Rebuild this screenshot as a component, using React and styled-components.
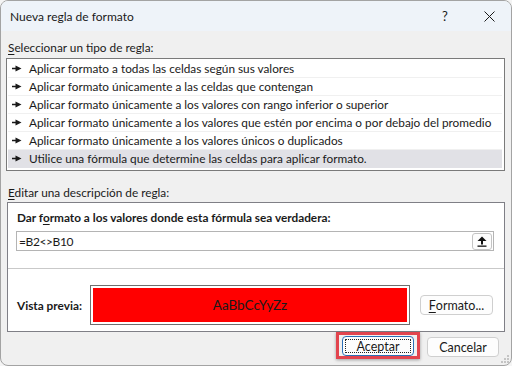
import styled, { createGlobalStyle } from "styled-components";

const GlobalStyle = createGlobalStyle`
  html, body {
    margin: 0;
    padding: 0;
    background: #f4f4f4;
  }
  body {
    font-family: Lato, "Noto Sans", sans-serif;
    font-size: 11.8px;
    color: #1a1a1a;
  }
`;

const Window = styled.div`
  position: relative;
  box-sizing: border-box;
  width: 512px;
  height: 366px;
  border: 1px solid #a3a3a3;
  border-radius: 8px;
  overflow: hidden;
  background: #f0f0f0;
  display: flex;
  flex-direction: column;
`;

const TitleBar = styled.div`
  height: 30px;
  background: #eef3f9;
  display: flex;
  align-items: center;
  padding-left: 9px;
`;

const Title = styled.span`
  flex: 1;
  font-size: 12px;
  color: #1a1a1a;
`;

const TitleButton = styled.span`
  width: 44px;
  height: 30px;
  display: flex;
  align-items: center;
  justify-content: center;
  font-size: 13px;
  color: #1a1a1a;
`;

const Body = styled.div`
  flex: 1;
  display: flex;
  flex-direction: column;
  padding: 9px 6px 0 5px;
`;

const SectionLabel = styled.div`
  height: 16px;
  line-height: 16px;
  padding-left: 2px;
  margin-bottom: ${(p) => p.gap}px;
  margin-top: ${(p) => p.top || 0}px;
  & u {
    text-decoration-thickness: 1px;
    text-underline-offset: 2px;
  }
`;

const ListBox = styled.div`
  background: #fff;
  border: 1px solid #7a7a7a;
  padding: 1px 2px 2px 1px;
`;

const Row = styled.div`
  height: 17px;
  border-bottom: 1px solid ${(p) => (p.selected ? "#e1e1e6" : "#f0f0f0")};
  background: ${(p) => (p.selected ? "#e1e1e6" : "#fff")};
  display: flex;
  align-items: center;
  padding-left: 4px;
  gap: 7px;
  white-space: nowrap;
  & svg {
    flex-shrink: 0;
  }
`;

const Bullet = () => (
  <svg width="10" height="7" viewBox="0 0 10 7">
    <line x1="0" y1="3.5" x2="4" y2="3.5" stroke="#1a1a1a" strokeWidth="1.3" />
    <polygon points="3.5,0.5 9.5,3.5 3.5,6.5" fill="#1a1a1a" />
  </svg>
);

const Panel = styled.div`
  margin: 0 0 0 1px;
  background: #fff;
  border: 1px solid #7f7f86;
  height: 130px;
  box-sizing: border-box;
  display: flex;
  flex-direction: column;
`;

const PanelTop = styled.div`
  padding: 7px 10px 0 8px;
  height: 66px;
  box-sizing: border-box;
  border-bottom: 1px solid #c9c9c9;
`;

const BoldLabel = styled.div`
  font-weight: 700;
  height: 16px;
  line-height: 16px;
  padding-left: 1px;
  margin-bottom: 5px;
  white-space: nowrap;
  & u {
    text-underline-offset: 2px;
  }
`;

const InputBox = styled.div`
  height: 20px;
  box-sizing: border-box;
  border: 1px solid #b4b4b4;
  display: flex;
  align-items: center;
  justify-content: space-between;
  padding: 0 1px 0 2px;
  font-size: 12px;
  letter-spacing: -0.4px;
`;

const RefButton = styled.div`
  width: 20px;
  height: 17px;
  box-sizing: border-box;
  border: 1px solid #c4c4c4;
  border-radius: 3px;
  background: #fdfdfd;
  display: flex;
  align-items: center;
  justify-content: center;
`;

const PanelBottom = styled.div`
  flex: 1;
  display: flex;
  align-items: center;
  padding: 16px 9px 6px 9px;
`;

const PreviewLabel = styled.span`
  font-weight: 700;
  width: 73px;
  white-space: nowrap;
`;

const PreviewFrame = styled.div`
  width: 320px;
  height: 40px;
  box-sizing: border-box;
  border: 1px solid #6f6f6f;
  padding: 2px;
  margin-right: 10px;
`;

const PreviewFill = styled.div`
  height: 100%;
  background: #ff0000;
  display: flex;
  align-items: center;
  justify-content: center;
  font-size: 13.5px;
  color: #1a1a1a;
`;

const Button = styled.div`
  width: ${(p) => p.w || 72}px;
  height: 20px;
  box-sizing: border-box;
  border: 1px solid ${(p) => (p.primary ? "#2d6fb6" : "#cfcfcf")};
  border-radius: 4px;
  background: #fdfdfd;
  display: flex;
  align-items: center;
  justify-content: center;
  font-size: 12.5px;
  position: relative;
  margin-top: ${(p) => p.drop || 0}px;
  & u {
    text-underline-offset: 2px;
  }
`;

const FocusRing = styled.span`
  position: absolute;
  inset: 2px;
  border: 1px dotted #222;
  border-radius: 1px;
`;

const Footer = styled.div`
  display: flex;
  justify-content: flex-end;
  align-items: flex-start;
  gap: 7px;
  padding-right: 6px;
`;

const Highlight = styled.div`
  border: 3px solid #e2444e;
  padding: 1px 3px 0 3px;
  box-shadow: 0 1px 3px rgba(0, 0, 0, 0.35);
`;

const Grip = styled.svg`
  position: absolute;
  right: 2px;
  bottom: 2px;
`;

const rules = [
  "Aplicar formato a todas las celdas según sus valores",
  "Aplicar formato únicamente a las celdas que contengan",
  "Aplicar formato únicamente a los valores con rango inferior o superior",
  "Aplicar formato únicamente a los valores que estén por encima o por debajo del promedio",
  "Aplicar formato únicamente a los valores únicos o duplicados",
  "Utilice una fórmula que determine las celdas para aplicar formato.",
];

export default function App() {
  return (
    <>
      <GlobalStyle />
      <Window>
        <TitleBar>
          <Title>Nueva regla de formato</Title>
          <TitleButton>?</TitleButton>
          <TitleButton>
            <svg width="11" height="11" viewBox="0 0 11 11">
              <path d="M0.5 0.5 L10.5 10.5 M10.5 0.5 L0.5 10.5" stroke="#1a1a1a" strokeWidth="1" />
            </svg>
          </TitleButton>
        </TitleBar>
        <Body>
          <SectionLabel gap={2}>
            <u>S</u>eleccionar un tipo de regla:
          </SectionLabel>
          <ListBox>
            {rules.map((r, i) => (
              <Row key={r} selected={i === rules.length - 1}>
                <Bullet />
                {r}
              </Row>
            ))}
          </ListBox>
          <SectionLabel top={14} gap={1}>
            <u>E</u>ditar una descripción de regla:
          </SectionLabel>
          <Panel>
            <PanelTop>
              <BoldLabel>
                Dar f<u>o</u>rmato a los valores donde esta fórmula sea verdadera:
              </BoldLabel>
              <InputBox>
                <span>=B2&lt;&gt;B10</span>
                <RefButton>
                  <svg width="10" height="11" viewBox="0 0 10 11">
                    <polygon points="5,0.5 9.5,5 0.5,5" fill="#111" />
                    <rect x="4" y="4.5" width="2" height="4" fill="#111" />
                    <rect x="0.5" y="9.5" width="9" height="1.3" fill="#111" />
                  </svg>
                </RefButton>
              </InputBox>
            </PanelTop>
            <PanelBottom>
              <PreviewLabel>Vista previa:</PreviewLabel>
              <PreviewFrame>
                <PreviewFill>AaBbCcYyZz</PreviewFill>
              </PreviewFrame>
              <Button w={73}>
                <u>F</u>ormato...
              </Button>
            </PanelBottom>
          </Panel>
          <Footer>
            <Highlight>
              <Button primary>
                <FocusRing />
                Aceptar
              </Button>
            </Highlight>
            <Button drop={5}>Cancelar</Button>
          </Footer>
        </Body>
        <Grip width="9" height="9" viewBox="0 0 9 9">
          {[
            [7, 1], [7, 4], [4, 4], [7, 7], [4, 7], [1, 7],
          ].map(([x, y]) => (
            <rect key={`${x}-${y}`} x={x} y={y} width="2" height="2" fill="#c4c4c4" />
          ))}
        </Grip>
      </Window>
    </>
  );
}
